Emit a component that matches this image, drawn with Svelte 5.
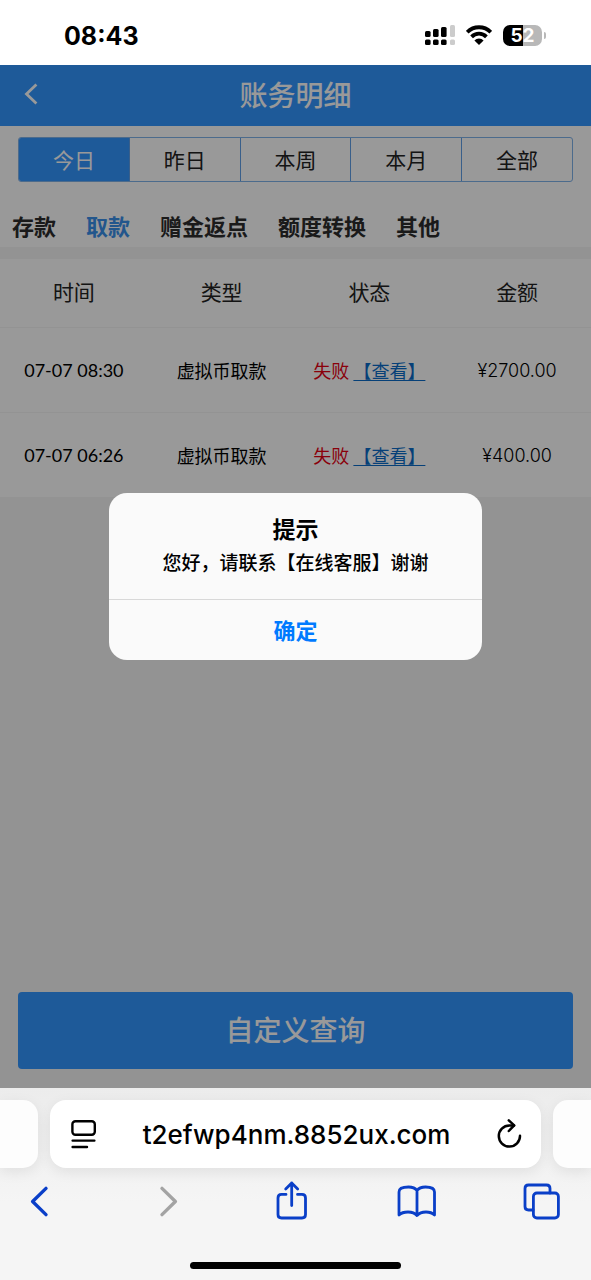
<script>
  let ranges = ["今日", "昨日", "本周", "本月", "全部"];
  let range = "今日";

  let types = ["存款", "取款", "赠金返点", "额度转换", "其他"];
  let type = "取款";

  let records = [
    { time: "07-07 08:30", kind: "虚拟币取款", status: "失败", amount: "¥2700.00" },
    { time: "07-07 06:26", kind: "虚拟币取款", status: "失败", amount: "¥400.00" },
  ];

  let showDialog = true;
</script>

<div class="phone">
  <div class="status">
    <span class="clock">08:43</span>
    <div class="indicators">
      <svg width="30" height="20" viewBox="0 0 30 20">
        <rect x="0" y="6" width="5.600" height="6" rx="1.500" />
        <rect x="8" y="4" width="5.600" height="8" rx="1.500" />
        <rect x="16" y="2" width="5.600" height="10" rx="1.500" />
        <rect x="25" y="0" width="5" height="12" rx="1.500" fill="#ccc" />
        <rect x="0" y="14.500" width="5.600" height="5.500" rx="1.500" />
        <rect x="8" y="14.500" width="5.600" height="5.500" rx="1.500" />
        <rect x="16" y="14.500" width="5.600" height="5.500" rx="1.500" />
        <rect x="25" y="14.500" width="5" height="5.500" rx="1.500" fill="#ccc" />
      </svg>
      <svg width="26" height="20" viewBox="0 0 26 20">
        <path
          d="M1.200 7.200 A16.500 16.500 0 0 1 24.800 7.200 M5.600 11.800 A10.400 10.400 0 0 1 20.400 11.800"
          fill="none"
          stroke="#000"
          stroke-width="3.800"
        />
        <path d="M13 20 L8.400 15.400 A6.500 6.500 0 0 1 17.600 15.400 Z" />
      </svg>
      <div class="battery"><span class="level">52</span><i></i></div>
    </div>
  </div>

  <div class="page">
    <header>
      <button class="back" aria-label="返回">
        <svg width="14" height="22" viewBox="0 0 14 22">
          <path d="M12.400 1.500 L2.500 11 L12.400 20.500" fill="none" stroke="#fff" stroke-width="2.800" />
        </svg>
      </button>
      <h1>账务明细</h1>
    </header>

    <div class="filters">
      <div class="ranges">
        {#each ranges as r}
          <button class:active={r == range} on:click={() => (range = r)}>{r}</button>
        {/each}
      </div>
      <nav class="types">
        {#each types as t}
          <button class:active={t == type} on:click={() => (type = t)}>{t}</button>
        {/each}
      </nav>
    </div>

    <table>
      <thead>
        <tr>
          <th>时间</th>
          <th>类型</th>
          <th>状态</th>
          <th>金额</th>
        </tr>
      </thead>
      <tbody>
        {#each records as rec}
          <tr>
            <td class="time">{rec.time}</td>
            <td>{rec.kind}</td>
            <td><span class="failed">{rec.status}</span> <a href="#view">【查看】</a></td>
            <td class="amount">{rec.amount}</td>
          </tr>
        {/each}
      </tbody>
    </table>

    <button class="query">自定义查询</button>

    {#if showDialog}
      <div class="mask">
        <div class="dialog" role="alertdialog" aria-labelledby="tip">
          <div class="message">
            <h2 id="tip">提示</h2>
            <p>您好，请联系【在线客服】谢谢</p>
          </div>
          <button on:click={() => (showDialog = false)}>确定</button>
        </div>
      </div>
    {/if}
  </div>

  <div class="browser">
    <div class="tabs">
      <div class="side left"></div>
      <div class="address">
        <button aria-label="页面菜单">
          <svg width="26" height="30" viewBox="0 0 26 30" fill="none" stroke="#000" stroke-width="2.400" stroke-linecap="round">
            <rect x="1.400" y="2.200" width="22.400" height="13.600" rx="3" />
            <path d="M1.600 21.600 H23.400 M1.600 28 H16" />
          </svg>
        </button>
        <span>t2efwp4nm.8852ux.com</span>
        <button aria-label="刷新">
          <svg width="26" height="30" viewBox="0 0 26 30" fill="none" stroke="#000" stroke-width="2.500" stroke-linecap="round" stroke-linejoin="round">
            <path d="M18 6.400 H13.400 A10.600 10.600 0 1 0 24 16.800" />
            <path d="M12.800 1.400 L18.200 6.400 L12.800 12" />
          </svg>
        </button>
      </div>
      <div class="side right"></div>
    </div>

    <div class="toolbar">
      <button aria-label="后退">
        <svg width="40" height="40" viewBox="0 0 40 40">
          <path d="M27 8.400 L13.600 21.500 L27 34.600" />
        </svg>
      </button>
      <button class="off" aria-label="前进">
        <svg width="40" height="40" viewBox="0 0 40 40">
          <path d="M17 8.400 L30.400 21.500 L17 34.600" />
        </svg>
      </button>
      <button aria-label="分享">
        <svg class="thin" width="40" height="40" viewBox="0 0 40 40">
          <path d="M16 14.400 H11.500 Q8 14.400 8 17.900 V34.500 Q8 38 11.500 38 H32 Q35.500 38 35.500 34.500 V17.900 Q35.500 14.400 32 14.400 H27.500" />
          <path d="M21.700 25.500 V3 M15.700 9 L21.700 3 L27.700 9" />
        </svg>
      </button>
      <button aria-label="书签">
        <svg class="thin" width="40" height="40" viewBox="0 0 40 40">
          <path d="M21 10.500 Q18.500 7 12.500 7 Q3 7 3 12 V35 Q6 32 12 32 Q18 32 21 35.500 Q24 32 30 32 Q35.500 32 38.500 35 V12 Q38.500 7 29.500 7 Q23.500 7 21 10.500 V35" />
        </svg>
      </button>
      <button aria-label="标签页">
        <svg class="thin" width="40" height="40" viewBox="0 0 40 40">
          <rect x="12.400" y="13" width="25" height="25" rx="3.500" />
          <path d="M12 30 H7.500 Q4 30 4 26.500 V8.500 Q4 5 7.500 5 H25.500 Q29 5 29 8.500 V13" />
        </svg>
      </button>
    </div>
    <div class="home"></div>
  </div>
</div>

<style>
  :global(body) {
    background: #f5f5f5;
  }

  .phone {
    min-height: 100vh;
    display: flex;
    flex-direction: column;
    font-family: "Noto Sans CJK SC", sans-serif;
    color: #000;
  }

  button {
    border: 0;
    padding: 0;
    background: none;
    font: inherit;
    color: inherit;
    cursor: pointer;
  }

  svg {
    display: block;
  }

  .status {
    height: 65px;
    padding: 0 45px 0 64px;
    box-sizing: border-box;
    background: #fff;
    display: flex;
    align-items: center;
    justify-content: space-between;
    font-family: Inter, "Liberation Sans", sans-serif;
    font-weight: 700;
  }

  .clock {
    font-size: 25px;
    padding-top: 6px;
  }

  .indicators {
    display: flex;
    align-items: center;
    gap: 11px;
    padding-top: 5px;
  }

  .battery {
    display: flex;
    align-items: center;
    gap: 2px;
  }

  .level {
    width: 39px;
    height: 21px;
    border-radius: 7px;
    background: linear-gradient(90deg, #000 52%, #b8b8b8 52%);
    color: #fff;
    font-size: 19px;
    line-height: 21px;
    text-align: center;
  }

  .battery i {
    width: 2px;
    height: 7px;
    border-radius: 0 2px 2px 0;
    background: #b8b8b8;
  }

  .page {
    flex: 1;
    position: relative;
    display: flex;
    flex-direction: column;
    background: #f5f5f5;
  }

  header {
    height: 61px;
    padding-bottom: 4px;
    box-sizing: border-box;
    background: #3396ff;
    color: #fff;
    display: grid;
    grid-template-columns: 60px 1fr 60px;
    align-items: center;
  }

  .back {
    padding-left: 24px;
  }

  h1 {
    margin: 0;
    font-size: 28px;
    line-height: 40px;
    font-weight: 500;
    text-align: center;
  }

  .filters {
    background: #fff;
    padding-top: 11px;
  }

  .ranges {
    display: flex;
    margin: 0 18px;
    border: 1px solid #7fb2ea;
    border-radius: 3px;
    overflow: hidden;
  }

  .ranges button {
    flex: 1;
    height: 43px;
    padding-bottom: 2px;
    font-size: 21px;
    color: #222;
  }

  .ranges button + button {
    border-left: 1px solid #5f9fe6;
  }

  .ranges .active {
    background: #3396ff;
    color: #fff;
  }

  .types {
    display: flex;
    gap: 30px;
    padding: 22px 12px 0;
  }

  .types button {
    height: 43px;
    padding-bottom: 2px;
    font-size: 22px;
    line-height: 40px;
    font-weight: 700;
    color: #2c2c2c;
  }

  .types .active {
    color: #3a8fea;
  }

  table {
    width: 100%;
    margin-top: 12px;
    border-collapse: collapse;
    table-layout: fixed;
    background: #fff;
    font-size: 18px;
  }

  th {
    height: 64px;
    padding: 0 0 4px;
    font-size: 21px;
    font-weight: 400;
    color: #222;
  }

  td {
    height: 84px;
    padding: 0;
    border-top: 1px solid #f5f5f5;
    text-align: center;
    white-space: nowrap;
  }

  .time {
    font-family: Lato, "Noto Sans CJK SC", sans-serif;
  }

  .amount {
    font-family: Inter, "Noto Sans CJK SC", sans-serif;
    font-weight: 300;
  }

  .failed {
    color: #e60012;
  }

  td a {
    color: #0a6cc9;
    text-underline-offset: 2px;
  }

  .query {
    height: 77px;
    margin: auto 18px 19px;
    padding-bottom: 4px;
    border-radius: 4px;
    background: #3396ff;
    color: #fff;
    font-size: 28px;
    font-weight: 500;
  }

  .mask {
    position: absolute;
    inset: 0;
    background: rgba(0, 0, 0, 0.4);
    display: flex;
    align-items: center;
    justify-content: center;
  }

  .dialog {
    width: 63%;
    border-radius: 18px;
    background: #fafafa;
    overflow: hidden;
    text-align: center;
  }

  .message {
    padding: 17px 12px 21px;
  }

  h2 {
    margin: 0;
    font-size: 23px;
    line-height: 36px;
    font-weight: 700;
  }

  p {
    margin: 0;
    font-size: 19px;
    line-height: 32px;
    font-weight: 500;
    white-space: nowrap;
  }

  .dialog button {
    width: 100%;
    height: 61px;
    padding-bottom: 2px;
    border-top: 1px solid #d8d8d8;
    color: #007aff;
    font-size: 22px;
    font-weight: 700;
  }

  .browser {
    background: linear-gradient(#ececec, #f5f5f5 60%);
    padding-top: 12px;
    box-sizing: border-box;
    height: 192px;
    overflow: hidden;
  }

  .tabs {
    display: flex;
    gap: 12px;
  }

  .side {
    width: 38px;
    background: #fdfdfd;
    box-shadow: 0 4px 14px rgba(0, 0, 0, 0.08);
  }

  .left {
    border-radius: 0 15px 15px 0;
  }

  .right {
    border-radius: 15px 0 0 15px;
  }

  .address {
    flex: 1;
    height: 68px;
    padding: 0 19px 0 21px;
    box-sizing: border-box;
    border-radius: 16px;
    background: #fff;
    box-shadow: 0 4px 14px rgba(0, 0, 0, 0.08);
    display: flex;
    align-items: center;
    justify-content: space-between;
    font-family: Inter, "Liberation Sans", sans-serif;
    font-size: 26px;
    font-weight: 500;
  }

  .toolbar {
    display: flex;
    justify-content: space-between;
    padding: 12px 30px 0 19px;
  }

  .toolbar svg {
    fill: none;
    stroke: #0a3fc8;
    stroke-width: 3.4;
    stroke-linecap: round;
    stroke-linejoin: round;
  }

  .toolbar .thin {
    stroke-width: 2.8;
  }

  .toolbar .off svg {
    stroke: #a3a3a3;
  }

  .home {
    width: 211px;
    height: 7px;
    margin: 42px auto 0;
    border-radius: 4px;
    background: #000;
  }
</style>
